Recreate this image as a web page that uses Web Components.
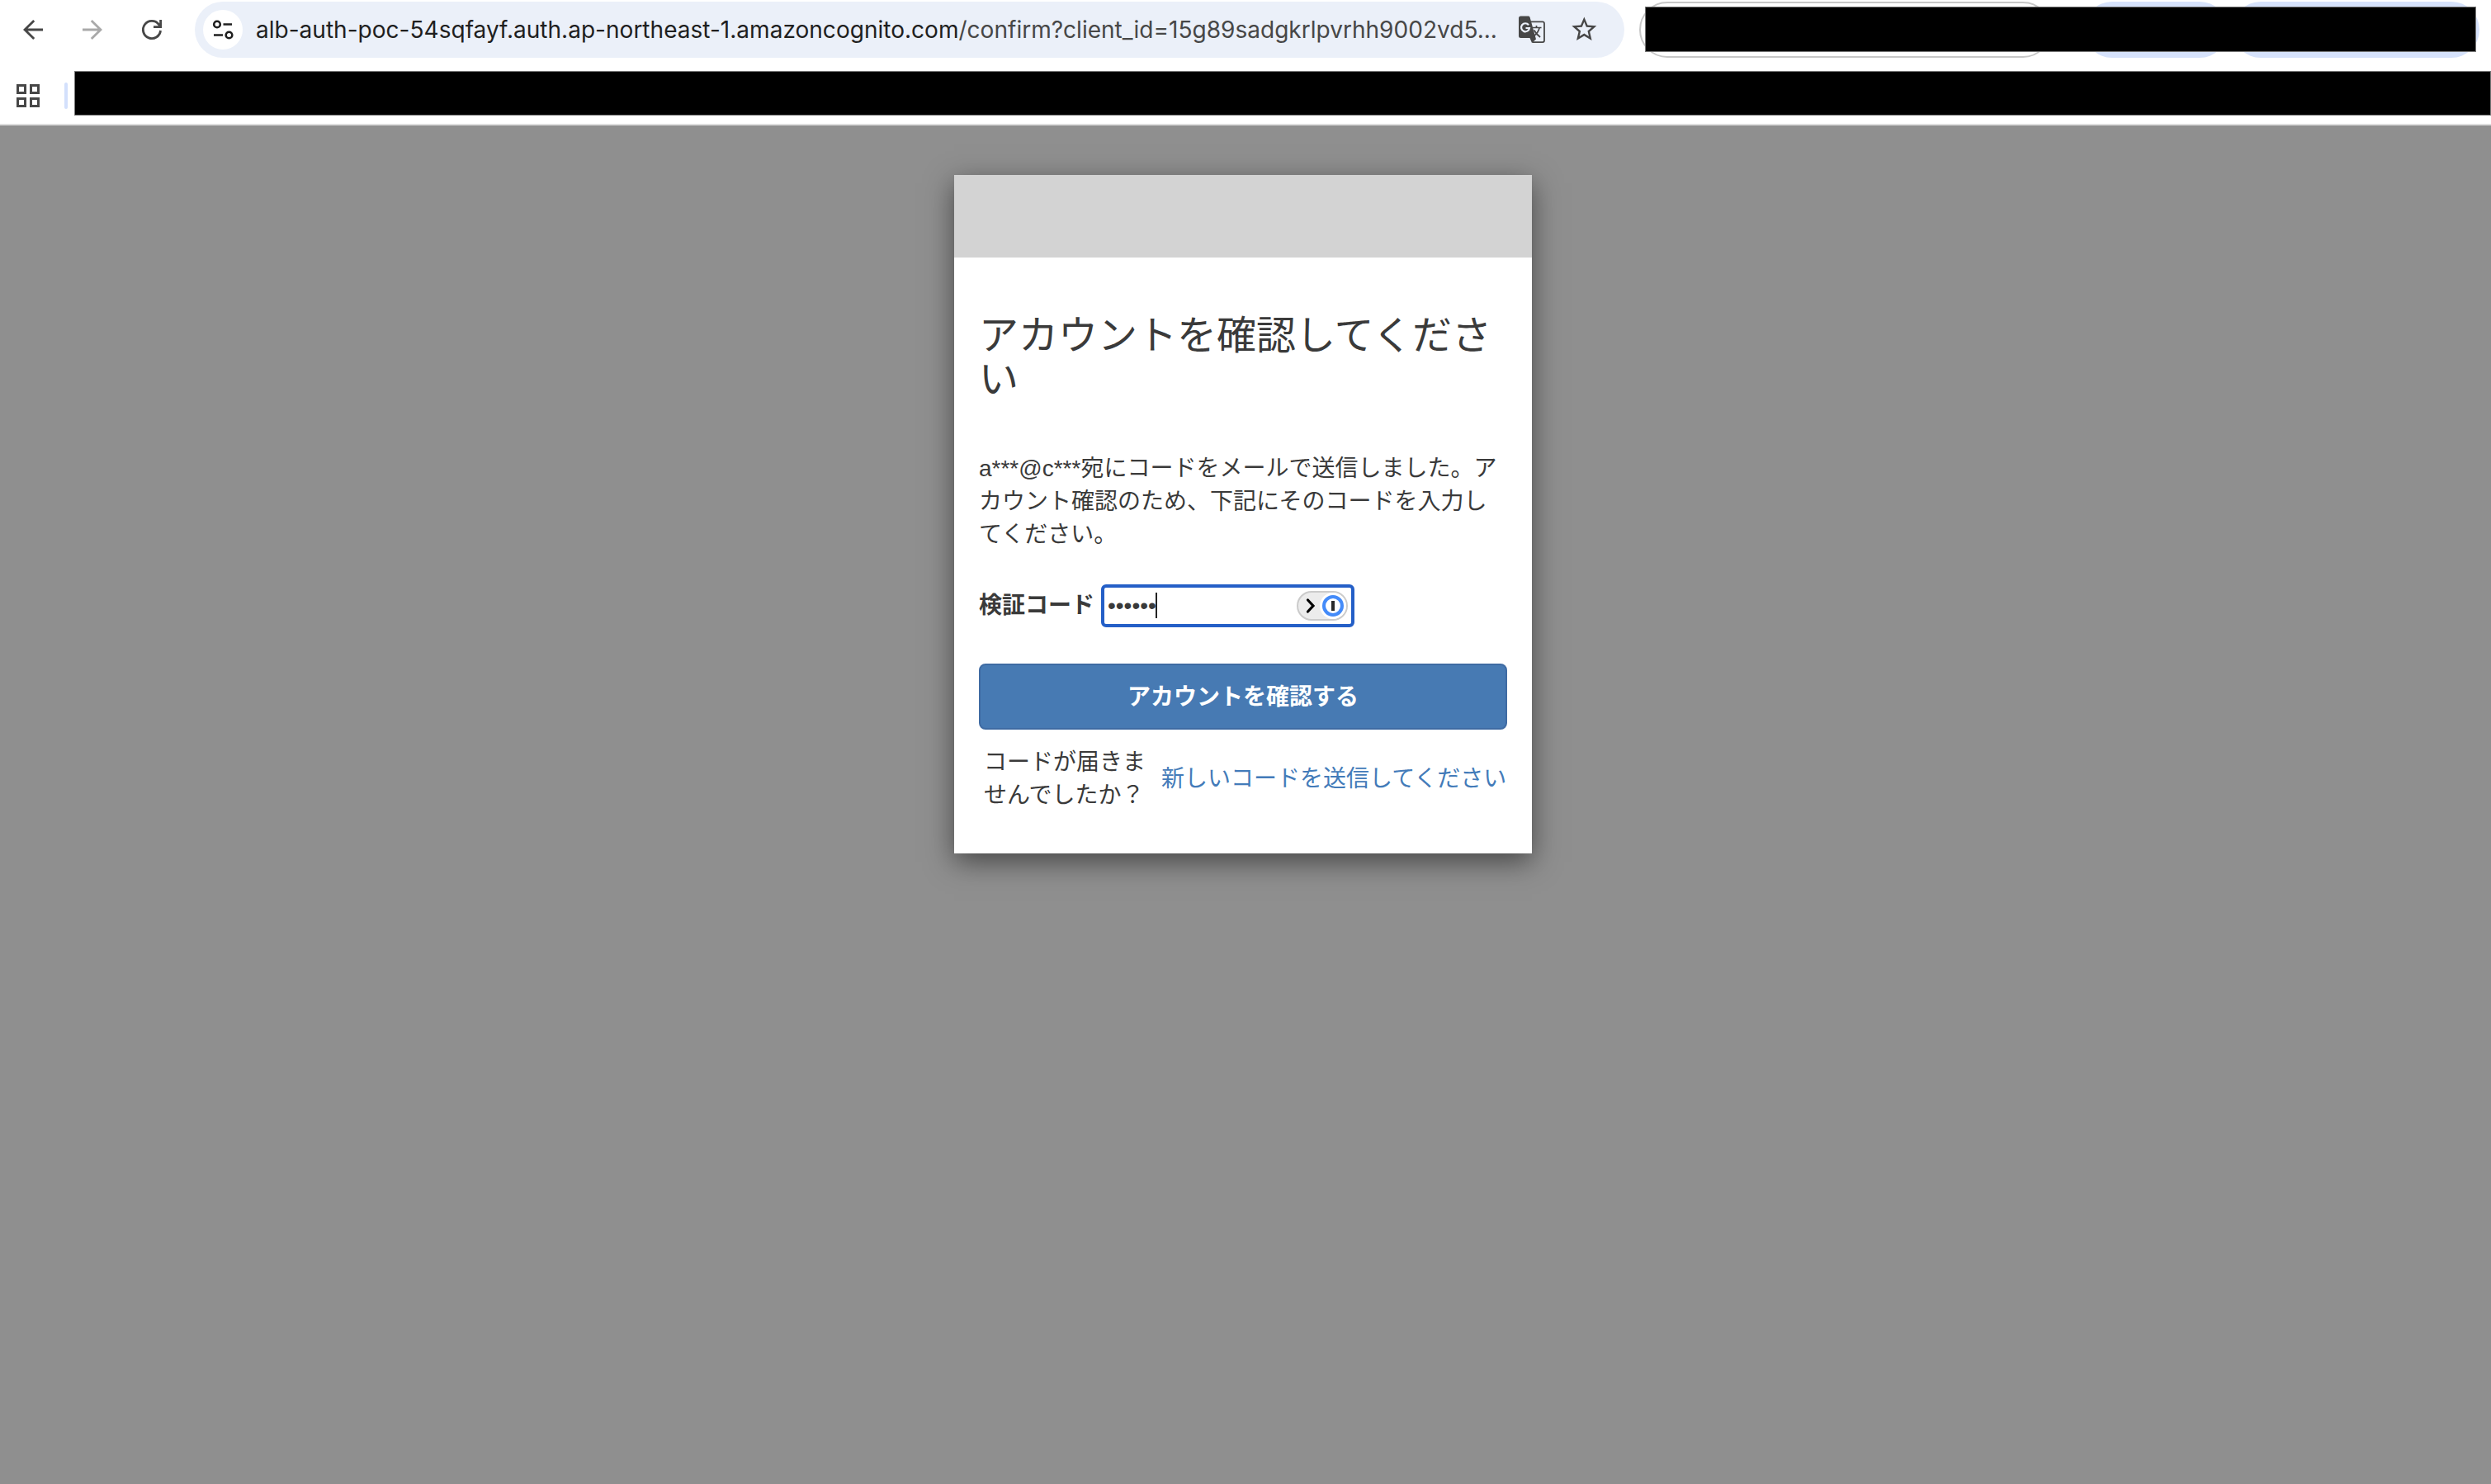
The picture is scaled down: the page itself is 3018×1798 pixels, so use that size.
<!DOCTYPE html>
<html lang="ja">
<head>
<meta charset="utf-8">
<title>Signin</title>
<style>
  body {
    margin: 0;
    height: 1798px;
    display: flex;
    flex-direction: column;
    overflow: hidden;
    background: #8f8f8f;
    color: #3a3a3a;
    font-family: "Liberation Sans", "Noto Sans CJK JP", sans-serif;
  }
</style>
</head>
<body>

<browser-toolbar>
  <address-bar slot="address" host="alb-auth-poc-54sqfayf.auth.ap-northeast-1.amazoncognito.com" path="/confirm?client_id=15g89sadgkrlpvrhh9002vd5..."></address-bar>
</browser-toolbar>
<bookmark-bar></bookmark-bar>

<modal-card>
  <h1 slot="title">アカウントを確認してください</h1>
  <p slot="description">a***@c***宛にコードをメールで送信しました。アカウント確認のため、下記にそのコードを入力してください。</p>
  <code-field slot="field" value="••••••">検証コード</code-field>
  <submit-button slot="action">アカウントを確認する</submit-button>
  <resend-row slot="footer">
    <span>コードが届きませんでしたか？</span>
    <a slot="link">新しいコードを送信してください</a>
  </resend-row>
</modal-card>

<script>
/** Attach an open shadow root and fill it with the given markup */
function render(el, html) {
  const template = document.createElement('template');
  template.innerHTML = html;
  const root = el.attachShadow({ mode: 'open' });
  root.appendChild(template.content.cloneNode(true));
  return root;
}

/* ---------- Browser toolbar -------------- */
class BrowserToolbar extends HTMLElement {
  constructor() {
    super();
    render(this, `
      <style>
        :host {
          display: flex;
          flex: none;
          height: 72px;
          padding-top: 2px;
          box-sizing: border-box;
          background: #fff;
        }
        .nav {
          display: flex;
          gap: 48px;
          width: 236px;
          height: 68px;
          padding-left: 28px;
          box-sizing: border-box;
          align-items: center;
        }
        svg { display: block; width: 24px; height: 24px; flex: none; overflow: visible; }
        .pills {
          position: relative;
          flex: 1;
          display: flex;
          margin-left: 18px;
          height: 68px;
        }
        .outline {
          width: 499px;
          box-sizing: border-box;
          border: 2px solid #c7c7c7;
          border-radius: 34px;
        }
        .pill { background: #d6e2fb; border-radius: 34px; }
        .chip { width: 174px; margin-left: 40px; }
        .profile { width: 299px; margin-left: 6px; }
        .mask {
          position: absolute;
          left: 7px;
          top: 6px;
          width: 1007px;
          height: 55px;
          box-sizing: border-box;
          background: #000;
          border: 1px solid #777;
        }
      </style>
      <div class="nav">
        <svg viewBox="0 0 24 24" fill="none" stroke="#474747" stroke-width="2.8"><path d="M24 12H2M13.2 .9L2 12l11.2 11.1"/></svg>
        <svg viewBox="0 0 24 24" fill="none" stroke="#a9a9a9" stroke-width="2.8"><path d="M0 12h22M10.8 .9L22 12 10.8 23.1"/></svg>
        <svg viewBox="0 0 24 24" fill="none" stroke="#474747" stroke-width="2.8"><path d="M22.5 13A10.6 10.6 0 1 1 20.2 5.3L22.2 8M22.6 0v8.6H14"/></svg>
      </div>
      <slot name="address"></slot>
      <div class="pills">
        <div class="outline"></div>
        <div class="pill chip"></div>
        <div class="pill profile"></div>
        <div class="mask"></div>
      </div>
    `);
  }
}

/* ---------- Address bar -------------- */
class AddressBar extends HTMLElement {
  constructor() {
    super();
    this._root = render(this, `
      <style>
        :host {
          display: flex;
          align-items: center;
          flex: none;
          width: 1732px;
          height: 68px;
          padding: 0 31px 0 10px;
          box-sizing: border-box;
          border-radius: 34px;
          background: #ebf0f9;
          color: #474747;
          font: 28.06px/68px Inter, "Liberation Sans", sans-serif;
        }
        .site {
          width: 48px;
          height: 48px;
          border-radius: 50%;
          background: #fff;
          flex: none;
        }
        .url { flex: none; width: 1506px; margin-left: 16px; white-space: nowrap; }
        #host { color: #1f1f1f; }
        svg { display: block; flex: none; }
        .translate { margin: 0 32px 0 24px; }
      </style>
      <div class="site">
        <svg width="48" height="48" fill="none" stroke="#1f1f1f" stroke-width="2.6">
          <circle cx="17" cy="17.5" r="3.8"/><path d="M24.5 17.5H35M13 30.5h11"/><circle cx="31.5" cy="30.5" r="3.8"/>
        </svg>
      </div>
      <div class="url"><span id="host"></span><span id="path"></span></div>
      <svg class="translate" width="32" height="34" viewBox="0 0 32 34">
        <path d="M14 7.400h15a2 2 0 0 1 2 2v20.700a2 2 0 0 1-2 2H16.500" fill="none" stroke="#474747" stroke-width="1.8"/>
        <path d="M2.500 .5h9.500a2 2 0 0 1 1.600 1.500L21 28.500l-5 4.500-2.500-6H2.500A2.500 2.500 0 0 1 0 24.500V3A2.500 2.500 0 0 1 2.500 .5z" fill="#474747"/>
        <path d="M12 11.200A5 5 0 1 0 13 15H8.500" fill="none" stroke="#ebf0f9" stroke-width="2.200"/>
        <path d="M17 14.500h10.500M21.500 12v2.500M25.200 14.500Q23.500 21 18.500 24.500M18.600 17.500q2.500 5 7.500 8.500" fill="none" stroke="#474747" stroke-width="1.700"/>
      </svg>
      <svg width="32" height="32" viewBox="1.8 1.7 21.3 21.3" fill="#474747">
        <path d="M22 9.240l-7.190-.62L12 2 9.190 8.630 2 9.240l5.460 4.730L5.820 21 12 17.270 18.180 21l-1.630-7.030L22 9.240zM12 15.400l-3.760 2.270 1-4.280-3.320-2.880 4.380-.38L12 6.100l1.710 4.040 4.380.38-3.320 2.880 1 4.280L12 15.400z"/>
      </svg>
    `);
  }

  static get observedAttributes() {
    return ['host', 'path'];
  }

  attributeChangedCallback(name, oldVal, newVal) {
    this._root.getElementById(name).textContent = newVal;
  }
}

/* ---------- Bookmark bar -------------- */
class BookmarkBar extends HTMLElement {
  constructor() {
    super();
    render(this, `
      <style>
        :host {
          display: flex;
          flex: none;
          height: 80px;
          box-sizing: border-box;
          padding: 14px 0 0 20px;
          border-bottom: 2px solid #dedede;
          background: #fff;
        }
        svg { margin-top: 16px; flex: none; }
        .divider { width: 4px; height: 32px; margin: 14px 8px 0 30px; border-radius: 2px; background: #d3e0fc; }
        .mask { flex: 1; height: 54px; box-sizing: border-box; background: #000; border: 1px solid #777; }
      </style>
      <svg width="28" height="28" fill="none" stroke="#474747" stroke-width="3">
        <path d="M1.500 1.500h9v9h-9zM17.500 1.500h9v9h-9zM1.500 17.500h9v9h-9zM17.500 17.500h9v9h-9z"/>
      </svg>
      <div class="divider"></div>
      <div class="mask"></div>
    `);
  }
}

/* ---------- Modal -------------- */
class ModalCard extends HTMLElement {
  constructor() {
    super();
    render(this, `
      <style>
        :host {
          display: block;
          flex: none;
          align-self: center;
          width: 700px;
          height: 822px;
          margin: 60px 6px 0 0;
          box-sizing: border-box;
          background: #fff;
          box-shadow: 0 10px 32px rgba(0, 0, 0, .5);
        }
        .banner { height: 100px; background: #d3d3d3; }
        .body { padding: 0 30px; }
        ::slotted(h1) {
          margin: 69px 0 0;
          font-size: 48px;
          line-height: 52.8px;
          font-weight: 400;
        }
        ::slotted(p) {
          margin: 61px 0 0;
          font-size: 28px;
          line-height: 40px;
        }
      </style>
      <div class="banner"></div>
      <div class="body">
        <slot name="title"></slot>
        <slot name="description"></slot>
        <slot name="field"></slot>
        <slot name="action"></slot>
        <slot name="footer"></slot>
      </div>
    `);
  }
}

/* ---------- Code field -------------- */
class CodeField extends HTMLElement {
  constructor() {
    super();
    this._root = render(this, `
      <style>
        :host {
          display: flex;
          align-items: center;
          height: 52px;
          margin-top: 40px;
          font-size: 28px;
          line-height: 40px;
        }
        label { font-weight: 700; width: 148px; flex: none; white-space: nowrap; }
        .input {
          display: flex;
          align-items: center;
          width: 307px;
          height: 52px;
          box-sizing: border-box;
          padding: 0 4px;
          border: 4px solid #245fc7;
          border-radius: 6px;
          background: #fff;
        }
        #value { width: 58px; flex: none; white-space: nowrap; }
        .caret { width: 2px; height: 31px; background: #222; }
        .manager { margin-left: auto; }
      </style>
      <label><slot></slot></label>
      <div class="input">
        <span id="value"></span>
        <span class="caret"></span>
        <svg class="manager" width="62" height="36">
          <rect x="1" y="1" width="60" height="34" rx="17" fill="#ececec" stroke="#cbcbcb" stroke-width="2"/>
          <path d="M13.500 11l6.500 7-6.500 7" fill="none" stroke="#000" stroke-width="3.200" stroke-linecap="round"/>
          <circle cx="44" cy="18" r="16" fill="#fff"/>
          <circle cx="44" cy="18" r="11" fill="none" stroke="#448bf9" stroke-width="4"/>
          <rect x="42" y="12" width="4" height="12" fill="#2b2b2b"/>
        </svg>
      </div>
    `);
  }

  static get observedAttributes() {
    return ['value'];
  }

  attributeChangedCallback(name, oldVal, newVal) {
    this._root.getElementById(name).textContent = newVal;
  }
}

/* ---------- Submit button -------------- */
class SubmitButton extends HTMLElement {
  constructor() {
    super();
    render(this, `
      <style>
        :host {
          display: block;
          height: 80px;
          margin-top: 44px;
          box-sizing: border-box;
          border: 2px solid #3f6ba3;
          border-radius: 8px;
          background: #477ab3;
          color: #fff;
          font-size: 28px;
          font-weight: 700;
          line-height: 78px;
          text-align: center;
        }
      </style>
      <slot></slot>
    `);
  }
}

/* ---------- Resend row -------------- */
class ResendRow extends HTMLElement {
  constructor() {
    super();
    render(this, `
      <style>
        :host {
          display: flex;
          align-items: center;
          gap: 13px;
          margin-top: 20px;
          padding-left: 6px;
          font-size: 28px;
          line-height: 40px;
        }
        .question { width: 202px; flex: none; }
        .link { white-space: nowrap; color: #437bb9; }
      </style>
      <div class="question"><slot></slot></div>
      <div class="link"><slot name="link"></slot></div>
    `);
  }
}

window.customElements.define('browser-toolbar', BrowserToolbar);
window.customElements.define('address-bar', AddressBar);
window.customElements.define('bookmark-bar', BookmarkBar);
window.customElements.define('modal-card', ModalCard);
window.customElements.define('code-field', CodeField);
window.customElements.define('submit-button', SubmitButton);
window.customElements.define('resend-row', ResendRow);
</script>
</body>
</html>
